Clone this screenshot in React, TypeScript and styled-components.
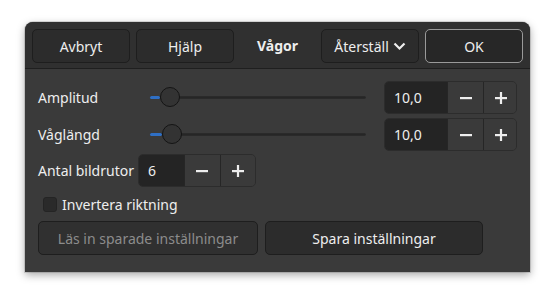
import React, { FC } from 'react'
import styled, { createGlobalStyle } from 'styled-components'

const GlobalStyle = createGlobalStyle`
  html, body {
    margin: 0;
    padding: 0;
    background: #ffffff;
  }
  body {
    font-family: 'Noto Sans', 'DejaVu Sans', sans-serif;
    font-size: 14px;
    color: #eeeeee;
  }
`

const Page = styled('div')`
  width: 555px;
  height: 300px;
  padding: 22px 0 0 25px;
  box-sizing: border-box;
`

const Dialog = styled('div')`
  width: 505px;
  height: 250px;
  background: #3a3a3a;
  border-radius: 8px 8px 0 0;
  box-shadow: 0 3px 9px rgba(0, 0, 0, 0.35), 0 0 0 1px rgba(0, 0, 0, 0.12);
  display: flex;
  flex-direction: column;
  overflow: hidden;
`

const HeaderBar = styled('header')`
  height: 47px;
  box-sizing: border-box;
  padding: 7px 7px 0 7px;
  display: flex;
  align-items: flex-start;
  gap: 6px;
  background: #303030;
  border-bottom: 1px solid #1f1f1f;
`

const HeaderButton = styled('button')<{ $focused?: boolean }>`
  width: 98px;
  height: 34px;
  box-sizing: border-box;
  border-radius: 5px;
  border: 1px solid ${(p) => (p.$focused ? '#9a9a9a' : '#1e1e1e')};
  background: ${(p) => (p.$focused ? '#272727' : '#2c2c2c')};
  color: #eeeeee;
  font-family: inherit;
  font-size: 14px;
  display: flex;
  align-items: center;
  justify-content: center;
  gap: 4px;
  padding: 0;
`

const Title = styled('div')`
  flex: 1;
  height: 34px;
  line-height: 34px;
  text-align: center;
  font-weight: bold;
  font-size: 14px;
`

const Body = styled('div')`
  flex: 1;
  padding: 12px 13px 0 13px;
  display: flex;
  flex-direction: column;
`

const SliderGrid = styled('div')`
  display: grid;
  grid-template-columns: 94px 216px 133px;
  column-gap: 18px;
  row-gap: 4px;
  align-items: center;
`

const Label = styled('span')`
  font-size: 14px;
  color: #eeeeee;
`

const SliderTrack = styled('div')`
  position: relative;
  height: 33px;
`

const Trough = styled('div')`
  position: absolute;
  left: 0;
  right: 0;
  top: 15px;
  height: 3px;
  border-radius: 2px;
  background: #262626;
  border: 1px solid #2a2a2a;
  box-sizing: border-box;
`

const TroughFill = styled('div')`
  position: absolute;
  left: 0;
  top: 15px;
  height: 3px;
  border-radius: 2px;
  background: #2f6fc4;
`

const Knob = styled('div')`
  position: absolute;
  top: 6px;
  width: 20px;
  height: 20px;
  box-sizing: border-box;
  border-radius: 50%;
  background: #333333;
  border: 1px solid #141414;
`

const Spin = styled('div')<{ $entry: number }>`
  display: grid;
  grid-template-columns: ${(p) => p.$entry}px 36px 35px;
  height: 33px;
  border-radius: 5px;
  overflow: hidden;
  border: 1px solid #2c2c2c;
  box-sizing: border-box;
`

const SpinEntry = styled('div')`
  background: #242424;
  display: flex;
  align-items: center;
  padding-left: 9px;
  font-size: 14px;
`

const SpinButton = styled('div')`
  background: #3a3a3a;
  border-left: 1px solid #262626;
  display: flex;
  align-items: center;
  justify-content: center;
`

const FramesRow = styled('div')`
  margin-top: 3px;
  display: flex;
  align-items: center;
  gap: 4px;
`

const CheckRow = styled('label')`
  margin-top: 9px;
  padding-left: 5px;
  display: flex;
  align-items: center;
  gap: 5px;
  height: 16px;
`

const CheckBox = styled('span')`
  width: 14px;
  height: 15px;
  box-sizing: border-box;
  border-radius: 3px;
  background: #2a2a2a;
  border: 1px solid #242424;
`

const ActionRow = styled('div')`
  margin-top: 9px;
  display: grid;
  grid-template-columns: 220px 218px;
  column-gap: 7px;
`

const ActionButton = styled('button')<{ $disabled?: boolean }>`
  height: 34px;
  box-sizing: border-box;
  border-radius: 5px;
  border: 1px solid #1e1e1e;
  background: ${(p) => (p.$disabled ? '#303030' : '#2c2c2c')};
  color: ${(p) => (p.$disabled ? '#8c8c8c' : '#eeeeee')};
  font-family: inherit;
  font-size: 14px;
  padding: 0;
`

const Minus: FC = () => (
  <svg width="14" height="14" viewBox="0 0 14 14">
    <rect x="1" y="6" width="12" height="2.2" fill="#eeeeee" />
  </svg>
)

const Plus: FC = () => (
  <svg width="14" height="14" viewBox="0 0 14 14">
    <rect x="1" y="6" width="12" height="2.2" fill="#eeeeee" />
    <rect x="5.9" y="1" width="2.2" height="12" fill="#eeeeee" />
  </svg>
)

const Chevron: FC = () => (
  <svg width="13" height="9" viewBox="0 0 13 9">
    <path d="M1.5 1.5 L6.5 6.5 L11.5 1.5" stroke="#eeeeee" strokeWidth="2.2" fill="none" />
  </svg>
)

const SpinBox: FC<{ value: string; entry: number }> = ({ value, entry }) => (
  <Spin $entry={entry}>
    <SpinEntry>{value}</SpinEntry>
    <SpinButton>
      <Minus />
    </SpinButton>
    <SpinButton>
      <Plus />
    </SpinButton>
  </Spin>
)

const Slider: FC<{ pos: number }> = ({ pos }) => (
  <SliderTrack>
    <Trough />
    <TroughFill style={{ width: pos }} />
    <Knob style={{ left: pos }} />
  </SliderTrack>
)

const App: FC = () => {
  return (
    <Page>
      <GlobalStyle />
      <Dialog>
        <HeaderBar>
          <HeaderButton>Avbryt</HeaderButton>
          <HeaderButton>Hjälp</HeaderButton>
          <Title>Vågor</Title>
          <HeaderButton>
            Återställ <Chevron />
          </HeaderButton>
          <HeaderButton $focused>OK</HeaderButton>
        </HeaderBar>
        <Body>
          <SliderGrid>
            <Label>Amplitud</Label>
            <Slider pos={10} />
            <SpinBox value="10,0" entry={62} />
            <Label>Våglängd</Label>
            <Slider pos={12} />
            <SpinBox value="10,0" entry={62} />
          </SliderGrid>
          <FramesRow>
            <Label>Antal bildrutor</Label>
            <SpinBox value="6" entry={45} />
          </FramesRow>
          <CheckRow>
            <CheckBox />
            <Label>Invertera riktning</Label>
          </CheckRow>
          <ActionRow>
            <ActionButton $disabled>Läs in sparade inställningar</ActionButton>
            <ActionButton>Spara inställningar</ActionButton>
          </ActionRow>
        </Body>
      </Dialog>
    </Page>
  )
}

export default App
